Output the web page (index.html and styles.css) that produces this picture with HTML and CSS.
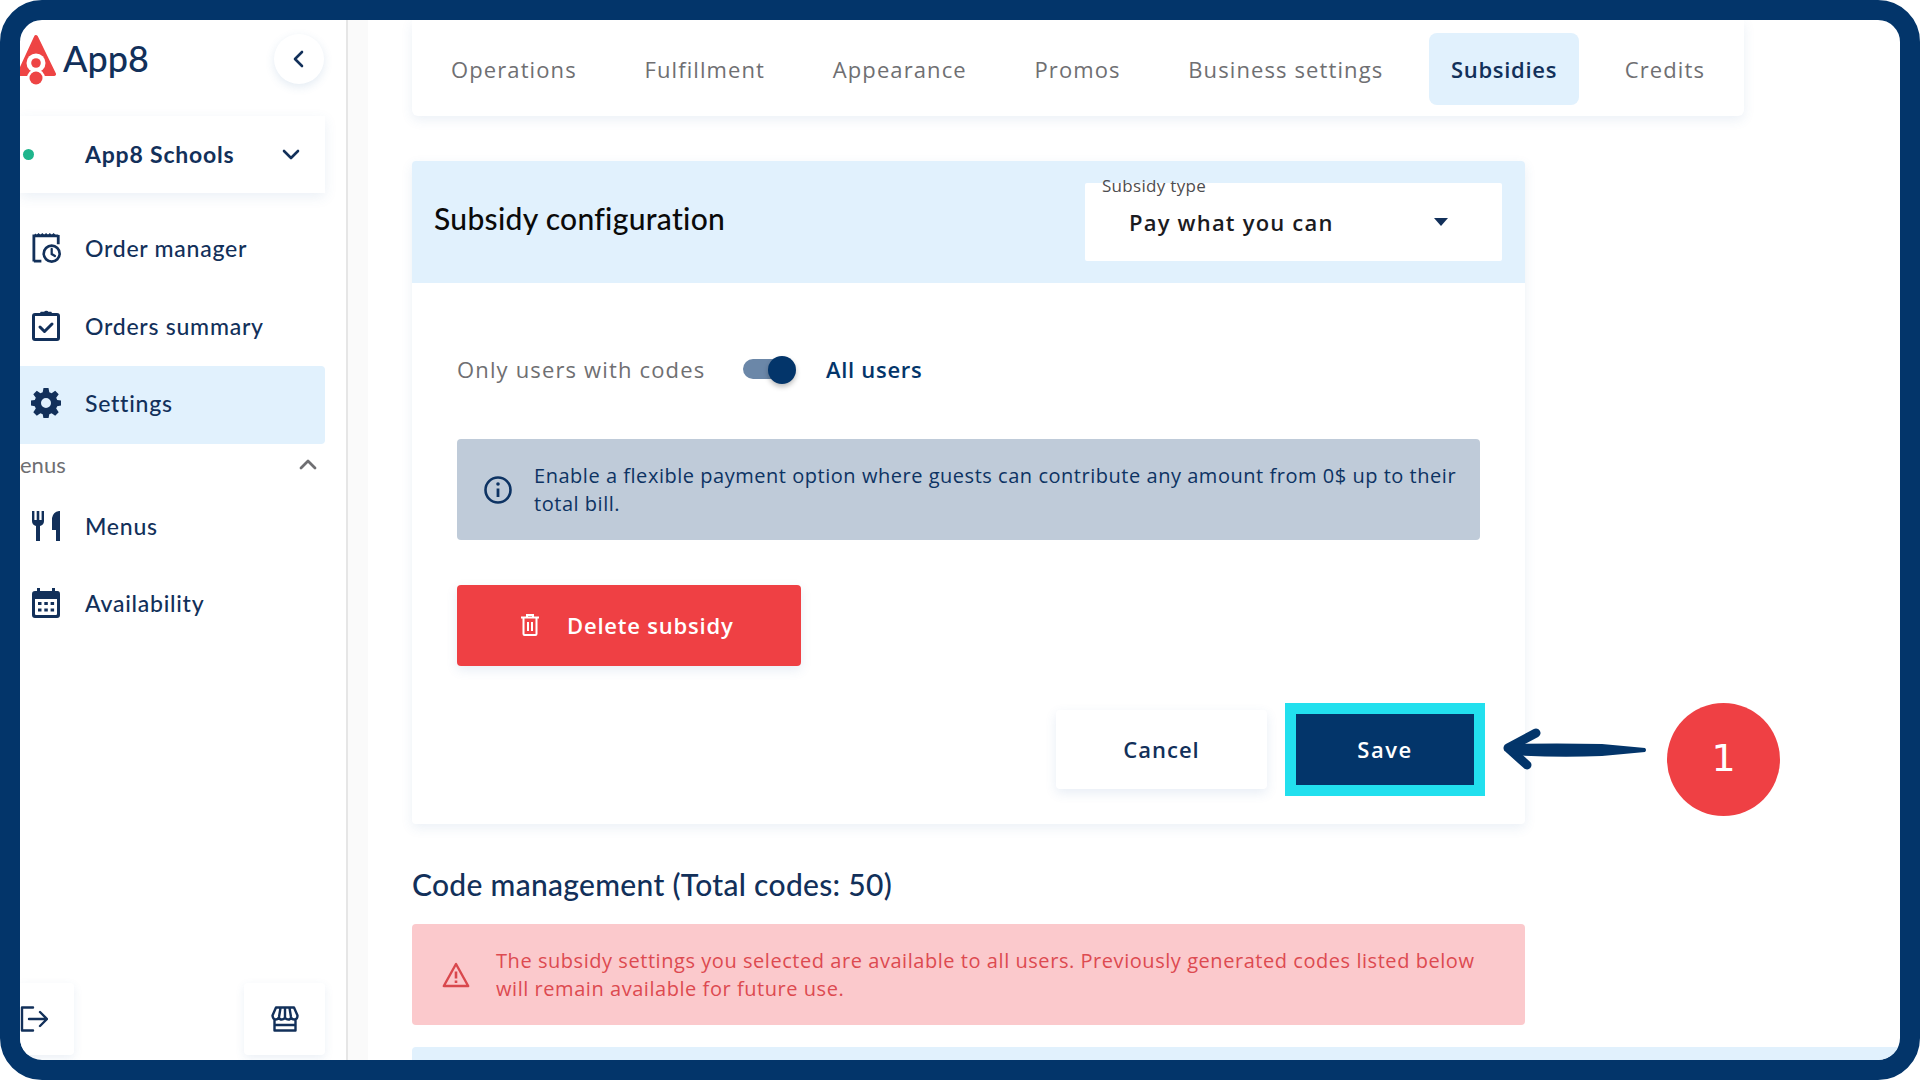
FILE: index.html
```html
<!DOCTYPE html>
<html lang="en">
<head>
  <meta charset="UTF-8">
  <title>App8 - Subsidies</title>
  <link rel="stylesheet" href="styles.css">
</head>
<body>
  <div class="frame">
    <aside class="sidebar">
      <div class="brand">
        <svg class="brand-logo" width="40" height="54" viewBox="0 0 40 54">
          <path d="M18 4 36 41 1 41z" fill="#ee4444" stroke="#ee4444" stroke-width="4" stroke-linejoin="round"/>
          <circle cx="18" cy="30" r="9.500" fill="#fff"/>
          <circle cx="18" cy="45" r="9" fill="#fff"/>
          <circle cx="18" cy="30" r="4.800" fill="#ee4444"/>
          <circle cx="18" cy="45" r="6.500" fill="#ee4444"/>
        </svg>
        <span class="brand-name">App8</span>
        <button class="collapse-btn">
          <svg width="14" height="20" viewBox="0 0 14 20" fill="none" stroke="#12305a" stroke-width="2.600" stroke-linecap="round" stroke-linejoin="round"><path d="M10 3 3 10l7 7"/></svg>
        </button>
      </div>

      <div class="store">
        <span class="store-dot"></span>
        <span class="store-name">App8 Schools</span>
        <svg class="store-chevron" width="18" height="12" viewBox="0 0 18 12" fill="none" stroke="#12305a" stroke-width="2.600" stroke-linecap="round" stroke-linejoin="round"><path d="m2 2 7 7 7-7"/></svg>
      </div>

      <a class="nav-item">
        <span class="nav-icon">
          <svg width="32" height="32" viewBox="0 0 32 32" fill="none" stroke="#12305a" stroke-width="3">
            <path d="M2 3h26M2 1.500v29M28 2v10M2 30h8"/>
            <path d="M3 1l2 2 2-2 2 2 2-2 2 2 2-2 2 2 2-2 2 2 2-2 2 2" stroke-width="1.400"/>
            <circle cx="21" cy="22" r="8.500" stroke-width="2.800"/>
            <path d="M21 17v5.500l3.500 2" stroke-linecap="round" stroke-width="2.400"/>
          </svg>
        </span>
        Order manager
      </a>
      <a class="nav-item">
        <span class="nav-icon">
          <svg width="28" height="31" viewBox="0 0 28 31" fill="none" stroke="#12305a" stroke-width="3" stroke-linejoin="round">
            <rect x="1.500" y="4.500" width="25" height="25" rx="1.500"/>
            <path d="M9 5V2.500h3.500a2 2 0 0 1 3.500 0H19V5z" fill="#12305a" stroke-width="1.500"/>
            <path d="m8 17 4.500 4.500L20 14" stroke-linecap="round"/>
          </svg>
        </span>
        Orders summary
      </a>
      <a class="nav-item is-active">
        <span class="nav-icon nav-icon-gear">
          <svg width="30" height="30" viewBox="0 0 30 30">
            <path fill="#12305a" fill-rule="evenodd" d="M12.500 0h5l.8 4.200 2.300 1L24.200 2.700l3.500 3.500-2.500 3.600 1 2.300L30 12.500v5l-3.800.8-1 2.300 2.500 3.600-3.500 3.500-3.600-2.500-2.300 1-.8 4.300h-5l-.8-4.300-2.300-1-3.600 2.500-3.500-3.500 2.500-3.600-1-2.300L0 17.500v-5l3.800-.4 1-2.300-2.500-3.600 3.500-3.500 3.600 2.500 2.300-1zM15 10a5 5 0 1 0 0 10 5 5 0 0 0 0-10z"/>
          </svg>
        </span>
        Settings
      </a>

      <div class="nav-section">
        <span>enus</span>
        <svg width="18" height="12" viewBox="0 0 18 12" fill="none" stroke="#6f6f72" stroke-width="2.800" stroke-linecap="round" stroke-linejoin="round"><path d="m2 10 7-7 7 7"/></svg>
      </div>

      <a class="nav-item">
        <span class="nav-icon">
          <svg width="28" height="30" viewBox="0 0 28 30" fill="#12305a">
            <path d="M0 0h2.400v9h2.300V0h2.600v9h2.300V0H12v10q0 4-4 5v15H4V15q-4-1-4-5z"/>
            <path d="M20 7q1-6 7-7h1v30h-4V19h-4z"/>
          </svg>
        </span>
        Menus
      </a>
      <a class="nav-item">
        <span class="nav-icon">
          <svg width="28" height="30" viewBox="0 0 28 30">
            <path fill="#12305a" fill-rule="evenodd" d="M5 0h3v3h12V0h3v3h2.500Q28 3 28 6v21q0 3-3 3H3q-3 0-3-3V6q0-3 3-3h2zM3 11v15q0 1 1 1h20q1 0 1-1V11z"/>
            <g fill="#12305a">
              <rect x="6" y="14" width="3.500" height="3"/><rect x="12.300" y="14" width="3.500" height="3"/><rect x="18.600" y="14" width="3.500" height="3"/>
              <rect x="6" y="20.500" width="3.500" height="3"/><rect x="12.300" y="20.500" width="3.500" height="3"/><rect x="18.600" y="20.500" width="3.500" height="3"/>
            </g>
          </svg>
        </span>
        Availability
      </a>

      <div class="sidebar-footer">
        <button class="footer-btn footer-btn-left">
          <svg width="28" height="26" viewBox="0 0 28 26" fill="none" stroke="#12305a" stroke-width="2.400" stroke-linecap="round" stroke-linejoin="round"><path d="M13 1.500H2v23h11M9 13h18M20 6l7 7-7 7"/></svg>
        </button>
        <button class="footer-btn">
          <svg width="28" height="26" viewBox="0 0 28 26" fill="none" stroke="#12305a" stroke-width="2.400" stroke-linejoin="round"><path d="M5 1.500h18l3.500 8q0 4-3 4t-3.300-2q-.7 2-3 2t-3.200-2q-.9 2-3.200 2t-3-2q-.8 2-3.300 2t-3-4zM3.500 13v11.500h21V13M9.500 2 8 11M14 2v9M18.500 2l1.500 9M4 19h20"/></svg>
        </button>
      </div>
    </aside>

    <div class="sidebar-gutter"></div>

    <main class="content">
      <nav class="tabs">
        <a class="tab">Operations</a>
        <a class="tab">Fulfillment</a>
        <a class="tab">Appearance</a>
        <a class="tab">Promos</a>
        <a class="tab">Business settings</a>
        <a class="tab is-active">Subsidies</a>
        <a class="tab">Credits</a>
      </nav>

      <section class="config-card">
        <header class="config-header">
          <h2>Subsidy configuration</h2>
          <div class="select">
            <span class="select-label">Subsidy type</span>
            <span class="select-value">Pay what you can</span>
            <span class="select-caret"></span>
          </div>
        </header>

        <div class="config-body">
          <div class="toggle-row">
            <span class="toggle-off">Only users with codes</span>
            <span class="toggle"><span class="toggle-thumb"></span></span>
            <span class="toggle-on">All users</span>
          </div>

          <div class="info-box">
            <svg width="28" height="28" viewBox="0 0 28 28" fill="none" stroke="#0d3363" stroke-width="2.600">
              <circle cx="14" cy="14" r="12.500"/>
              <path d="M14 12.500V21" stroke-width="2.800"/>
              <circle cx="14" cy="8" r="1.800" fill="#0d3363" stroke="none"/>
            </svg>
            <p>Enable a flexible payment option where guests can contribute any amount from 0$ up to their<br>total bill.</p>
          </div>

          <button class="delete-btn">
            <svg width="18" height="22" viewBox="0 0 18 22" fill="none" stroke="#fff" stroke-width="2"><path d="M0 3.500h18M6 3V1h6v2M2.500 3.500V20q0 1 1 1h11q1 0 1-1V3.500M7 8v9M11 8v9"/></svg>
            Delete subsidy
          </button>

          <div class="config-actions">
            <button class="cancel-btn">Cancel</button>
            <button class="save-btn">Save</button>
          </div>
        </div>
      </section>

      <h3 class="codes-title">Code management (Total codes: 50)</h3>

      <div class="alert">
        <svg width="28" height="26" viewBox="0 0 28 26" fill="none" stroke="#d9484d" stroke-width="2.400" stroke-linejoin="round">
          <path d="M14 2 1.800 24h24.400z"/>
          <path d="M14 9.500v7M14 18.500v2.500" stroke-width="2.600"/>
        </svg>
        <p>The subsidy settings you selected are available to all users. Previously generated codes listed below<br>will remain available for future use.</p>
      </div>

      <div class="codes-strip"></div>
    </main>

    <svg class="callout-arrow" width="150" height="48" viewBox="0 0 150 48" fill="#03356a">
      <path d="M36 8 8 23l19 17" fill="none" stroke="#03356a" stroke-width="9" stroke-linecap="round" stroke-linejoin="round"/>
      <path d="M12 19q45-1 90 0l43 4q2 2 0 4l-43 4q-45 2-90-1z"/>
    </svg>
    <div class="callout-badge">1</div>
  </div>
</body>
</html>
```

FILE: styles.css
```css
* {
  box-sizing: border-box;
}

html, body {
  margin: 0;
  padding: 0;
  background-color: #fff;
}

body {
  width: 1920px;
  height: 1080px;
  overflow: hidden;
  font-family: 'Open Sans', sans-serif;
}

button {
  font-family: inherit;
  border: none;
  cursor: pointer;
}

h2, h3, p {
  margin: 0;
}

.frame {
  position: relative;
  display: flex;
  width: 1920px;
  height: 1080px;
  border: 20px solid #03356a;
  border-radius: 42px;
  overflow: hidden;
  background-color: #fff;
}

/* sidebar */
.sidebar {
  display: flex;
  flex-direction: column;
  width: 326px;
  flex-shrink: 0;
  padding-right: 21px;
  font-family: 'Lato', sans-serif;
  color: #12305a;
}

.brand {
  display: flex;
  align-items: center;
  height: 96px;
  flex-shrink: 0;
  padding-bottom: 16px;
}

.brand-logo {
  margin-left: -2px;
}

.brand-name {
  margin-left: 5px;
  margin-top: -4px;
  font-family: 'Lato', sans-serif;
  font-size: 36px;
  font-weight: 500;
  color: #12305a;
}

.collapse-btn {
  display: flex;
  align-items: center;
  justify-content: center;
  width: 50px;
  height: 50px;
  margin-left: auto;
  margin-right: 1px;
  margin-top: -2px;
  border-radius: 50%;
  background-color: #fff;
  box-shadow: 0 3px 10px rgba(60, 110, 170, 0.14);
}

.store {
  display: flex;
  align-items: center;
  height: 77px;
  flex-shrink: 0;
  background-color: #fff;
  box-shadow: 0 4px 12px rgba(60, 110, 170, 0.1);
  font-size: 23px;
  font-weight: 700;
  letter-spacing: 0.8px;
}

.store-dot {
  width: 11px;
  height: 11px;
  margin-left: 3px;
  margin-right: 51px;
  border-radius: 50%;
  background-color: #1fb58c;
}

.store-name {
  margin-top: -1px;
}

.store-chevron {
  margin-left: auto;
  margin-right: 25px;
}

.nav-item {
  display: flex;
  align-items: center;
  gap: 23px;
  height: 77.5px;
  flex-shrink: 0;
  padding-left: 12px;
  padding-bottom: 3px;
  font-size: 23px;
  font-weight: 500;
  letter-spacing: 0.75px;
}

.store + .nav-item {
  margin-top: 18px;
}

.nav-item.is-active {
  background-color: #e1f1fd;
  border-radius: 0 4px 4px 0;
}

.nav-icon {
  display: flex;
  align-items: center;
  width: 30px;
}

.nav-icon-gear {
  margin-left: -1px;
  margin-right: 1px;
}

.nav-section {
  display: flex;
  align-items: center;
  justify-content: space-between;
  height: 45px;
  flex-shrink: 0;
  padding-right: 8px;
  padding-bottom: 4px;
  font-size: 22px;
  color: #6f6f72;
}

.sidebar-footer {
  display: flex;
  justify-content: space-between;
  margin-top: auto;
  margin-bottom: 5px;
}

.footer-btn {
  display: flex;
  align-items: center;
  justify-content: center;
  width: 81px;
  height: 72px;
  padding: 0;
  border-radius: 4px;
  background-color: #fff;
  box-shadow: 0 3px 10px rgba(60, 110, 170, 0.1);
}

.footer-btn-left {
  width: 54px;
  justify-content: flex-start;
  border-radius: 0 4px 4px 0;
}

.sidebar-gutter {
  width: 22px;
  flex-shrink: 0;
  background-color: #fafafa;
  border-left: 2px solid #e6e6e6;
}

/* main column */
.content {
  flex: 1;
  min-width: 0;
  padding-left: 44px;
  overflow: hidden;
}

.tabs {
  display: flex;
  gap: 23.700px;
  width: 1332px;
  height: 96px;
  padding: 13px 19px 11px 17px;
  background-color: #fff;
  border-radius: 0 0 6px 6px;
  box-shadow: 0 4px 12px rgba(60, 110, 170, 0.1);
}

.tab {
  display: flex;
  align-items: center;
  flex-shrink: 0;
  padding: 0 22px;
  border-radius: 8px;
  font-size: 22px;
  font-weight: 500;
  letter-spacing: 1.1px;
  white-space: nowrap;
  color: #6f6f72;
}

.tab.is-active {
  background-color: #e1f1fd;
  font-weight: 600;
  letter-spacing: 0.7px;
  color: #12305a;
}

.config-card {
  width: 1113px;
  margin-top: 45px;
  background-color: #fff;
  border-radius: 4px;
  box-shadow: 0 4px 12px rgba(60, 110, 170, 0.1);
}

.config-header {
  display: flex;
  align-items: center;
  justify-content: space-between;
  height: 122px;
  padding: 0 23px 0 22px;
  background-color: #e1f1fd;
  border-radius: 4px 4px 0 0;
}

.config-header h2 {
  margin-top: -8px;
  font-family: 'Lato', sans-serif;
  font-size: 30px;
  font-weight: 500;
  letter-spacing: 0.3px;
  color: #0a0a0a;
}

.select {
  position: relative;
  display: flex;
  align-items: center;
  width: 417px;
  height: 78px;
  padding: 0 44px;
  background-color: #fff;
  border-radius: 2px;
}

.select-label {
  position: absolute;
  top: -9px;
  left: 17px;
  font-size: 17px;
  letter-spacing: 0.3px;
  color: #4d4d50;
}

.select-value {
  font-size: 22px;
  font-weight: 600;
  letter-spacing: 1.2px;
  color: #1b1b1f;
}

.select-caret {
  margin-left: auto;
  margin-right: 10px;
  border-left: 7px solid transparent;
  border-right: 7px solid transparent;
  border-top: 8px solid #12305a;
}

.config-body {
  padding: 72px 40px 28px 45px;
}

.toggle-row {
  display: flex;
  align-items: center;
  height: 28px;
  font-size: 22px;
  font-weight: 500;
  letter-spacing: 1.15px;
}

.toggle-off {
  width: 286px;
  color: #6f6f72;
}

.toggle {
  position: relative;
  width: 50px;
  height: 20px;
  margin-right: 33px;
  border-radius: 10px;
  background-color: #6b87a8;
}

.toggle-thumb {
  position: absolute;
  top: -3px;
  right: -3px;
  width: 28px;
  height: 28px;
  border-radius: 50%;
  background-color: #03356a;
  box-shadow: 0 3px 5px rgba(0, 0, 0, 0.25);
}

.toggle-on {
  font-weight: 600;
  letter-spacing: 0.7px;
  color: #03356a;
}

.info-box {
  display: flex;
  align-items: center;
  gap: 22px;
  width: 1023px;
  height: 101px;
  margin-top: 56px;
  padding: 0 20px 0 27px;
  background-color: #bfcbd9;
  border-radius: 4px;
  font-size: 20px;
  line-height: 28px;
  letter-spacing: 0.53px;
  color: #0d3363;
}

.info-box svg {
  flex-shrink: 0;
}

.delete-btn {
  display: flex;
  align-items: center;
  gap: 28px;
  width: 344px;
  height: 81px;
  margin-top: 45px;
  padding: 0 0 2px 64px;
  background-color: #ef4044;
  border-radius: 4px;
  box-shadow: 0 4px 12px rgba(60, 110, 170, 0.12);
  font-size: 22px;
  font-weight: 600;
  letter-spacing: 0.8px;
  color: #fff;
}

.config-actions {
  display: flex;
  align-items: center;
  justify-content: flex-end;
  gap: 18px;
  margin-top: 37px;
}

.cancel-btn {
  width: 211px;
  height: 79px;
  padding-bottom: 3px;
  background-color: #fff;
  border-radius: 4px;
  box-shadow: 0 4px 12px rgba(60, 110, 170, 0.12);
  font-size: 22px;
  font-weight: 600;
  letter-spacing: 1px;
  color: #12305a;
}

.save-btn {
  width: 200px;
  height: 93px;
  padding-bottom: 3px;
  border: 11px solid #22e0ee;
  background-color: #03356a;
  font-size: 22px;
  font-weight: 600;
  letter-spacing: 1.5px;
  color: #fff;
}

.codes-title {
  margin-top: 40px;
  margin-bottom: 20px;
  font-family: 'Lato', sans-serif;
  font-size: 30px;
  font-weight: 500;
  letter-spacing: 0.3px;
  line-height: 40px;
  color: #12305a;
}

.alert {
  display: flex;
  align-items: center;
  gap: 26px;
  width: 1113px;
  height: 101px;
  padding: 0 20px 0 30px;
  background-color: #fbc9cc;
  border-radius: 4px;
  font-size: 20px;
  line-height: 28px;
  letter-spacing: 0.55px;
  color: #dd4a50;
}

.alert svg {
  flex-shrink: 0;
}

.codes-strip {
  height: 40px;
  margin-top: 22px;
  background-color: #e1f1fd;
  border-radius: 4px 4px 0 0;
}

/* tutorial annotation on top of the page */
.callout-arrow {
  position: absolute;
  left: 1480px;
  top: 705px;
}

.callout-badge {
  position: absolute;
  left: 1647px;
  top: 683px;
  display: flex;
  align-items: center;
  justify-content: center;
  width: 113px;
  height: 113px;
  padding-bottom: 4px;
  border-radius: 50%;
  background-color: #ef4044;
  font-family: 'DejaVu Sans', sans-serif;
  font-size: 38px;
  color: #fff;
}
```
